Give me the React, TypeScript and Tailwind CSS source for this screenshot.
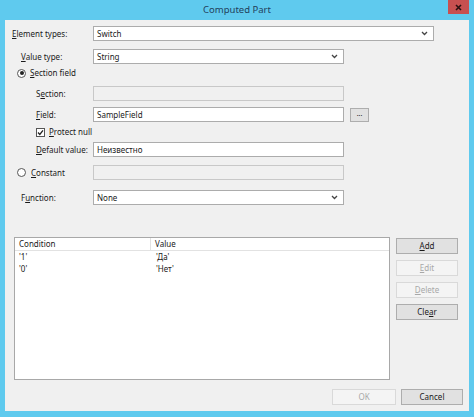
import React from 'react';

const font = { fontFamily: '"Noto Sans", "Open Sans", sans-serif' };

// underlined access key letter
const U = ({ children }: { children: React.ReactNode }) => <span className="underline underline-offset-1">{children}</span>;

const Chevron = () => (
  <svg width="7" height="5" viewBox="0 0 7 5" className="shrink-0">
    <path d="M1 1 L3.5 3.5 L6 1" fill="none" stroke="#444" strokeWidth="1.3" />
  </svg>
);

const Select = ({ value, w }: { value: string; w: string }) => (
  <div className={`${w} h-[15px] bg-white border border-[#acacac] flex items-center justify-between pl-[3px] pr-[5px]`}>
    <span>{value}</span>
    <Chevron />
  </div>
);

const Input = ({ value, disabled }: { value?: string; disabled?: boolean }) => (
  <div
    className={`w-[251px] h-[15px] border flex items-center pl-[3px] ${
      disabled ? 'bg-[#f0f0f0] border-[#c8c8c8]' : 'bg-white border-[#acacac]'
    }`}
  >
    {value}
  </div>
);

const Btn = ({ children, disabled, w = 'w-[62px]' }: { children: React.ReactNode; disabled?: boolean; w?: string }) => (
  <div
    className={`${w} h-[16px] border flex items-center justify-center ${
      disabled ? 'bg-[#f4f4f4] border-[#d9d9d9] text-[#a8a8a8]' : 'bg-[#e1e1e1] border-[#adadad] text-[#1a1a1a]'
    }`}
  >
    {children}
  </div>
);

export default function App() {
  return (
    <div style={font} className="w-[474px] h-[417px] bg-[#5fcaee] flex flex-col text-[8px] text-[#1a1a1a] leading-none">
      {/* title bar */}
      <div className="h-[20px] flex items-start">
        <div className="flex-1 h-[20px] flex items-center justify-center pl-[26px] text-[9.5px] text-[#23415c]">Computed Part</div>
        <div className="w-[21px] h-[14px] bg-[#c75050] flex items-center justify-center mr-[5px]">
          <svg width="7" height="7" viewBox="0 0 7 7">
            <path d="M1 1 L6 6 M6 1 L1 6" stroke="#2a1010" strokeWidth="1.6" />
          </svg>
        </div>
      </div>

      {/* body */}
      <div className="mx-[5px] h-[391px] bg-[#f0f0f0] flex flex-col">
        <div className="flex items-center mt-[6px]">
          <div className="w-[88px] pl-[7px]"><U>E</U>lement types:</div>
          <Select value="Switch" w="w-[341px]" />
        </div>
        <div className="flex items-center mt-[8px]">
          <div className="w-[88px] pl-[16px]"><U>V</U>alue type:</div>
          <Select value="String" w="w-[251px]" />
        </div>

        <div className="flex items-center h-[14px] mt-[2px] pl-[12px]">
          <div className="w-[9px] h-[9px] rounded-full border border-[#555] bg-white flex items-center justify-center">
            <div className="w-[4px] h-[4px] rounded-full bg-[#222]" />
          </div>
          <span className="ml-[4px]"><U>S</U>ection field</span>
        </div>

        <div className="flex items-center mt-[6px]">
          <div className="w-[88px] pl-[31px]">S<U>e</U>ction:</div>
          <Input disabled />
        </div>
        <div className="flex items-center mt-[6px]">
          <div className="w-[88px] pl-[31px]"><U>F</U>ield:</div>
          <Input value="SampleField" />
          <div className="ml-[6px] w-[19px] h-[14px] bg-[#e1e1e1] border border-[#adadad] flex items-center justify-center text-[7px] pb-[2px]">...</div>
        </div>

        <div className="flex items-center h-[14px] mt-[3px] pl-[31px]">
          <div className="w-[9px] h-[9px] border border-[#555] bg-white flex items-center justify-center">
            <svg width="7" height="7" viewBox="0 0 7 7">
              <path d="M1 3.5 L2.8 5.4 L6 1.3" fill="none" stroke="#222" strokeWidth="1.3" />
            </svg>
          </div>
          <span className="ml-[4px]"><U>P</U>rotect null</span>
        </div>

        <div className="flex items-center mt-[3px]">
          <div className="w-[88px] pl-[31px]"><U>D</U>efault value:</div>
          <Input value="Неизвестно" />
        </div>

        <div className="flex items-center mt-[8px]">
          <div className="w-[88px] pl-[12px] flex items-center">
            <div className="w-[9px] h-[9px] rounded-full border border-[#555] bg-white" />
            <span className="ml-[5px]"><U>C</U>onstant</span>
          </div>
          <Input disabled />
        </div>

        <div className="flex items-center mt-[10px]">
          <div className="w-[88px] pl-[16px]">F<U>u</U>nction:</div>
          <Select value="None" w="w-[251px]" />
        </div>

        {/* conditions list + side buttons */}
        <div className="flex mt-[32px] pl-[9px]">
          <div className="w-[376px] h-[143px] bg-white border border-[#a8a8a8] flex flex-col">
            <div className="h-[13px] flex border-b border-[#e2e2e2]">
              <div className="w-[136px] pl-[4px] flex items-center border-r border-[#e2e2e2]">Condition</div>
              <div className="pl-[4px] flex items-center">Value</div>
            </div>
            <div className="h-[12px] flex items-center">
              <div className="w-[136px] pl-[4px]">'1'</div>
              <div className="pl-[5px]">'Да'</div>
            </div>
            <div className="h-[12px] flex items-center">
              <div className="w-[136px] pl-[4px]">'0'</div>
              <div className="pl-[5px]">'Нет'</div>
            </div>
          </div>
          <div className="ml-[6px] mt-[1px] flex flex-col gap-[6px]">
            <Btn><U>A</U>dd</Btn>
            <Btn disabled><U>E</U>dit</Btn>
            <Btn disabled><U>D</U>elete</Btn>
            <Btn>Cle<U>a</U>r</Btn>
          </div>
        </div>

        <div className="flex justify-end gap-[5px] mt-[9px] pr-[6px]">
          <Btn disabled w="w-[64px]">OK</Btn>
          <Btn>Cancel</Btn>
        </div>
      </div>
    </div>
  );
}
